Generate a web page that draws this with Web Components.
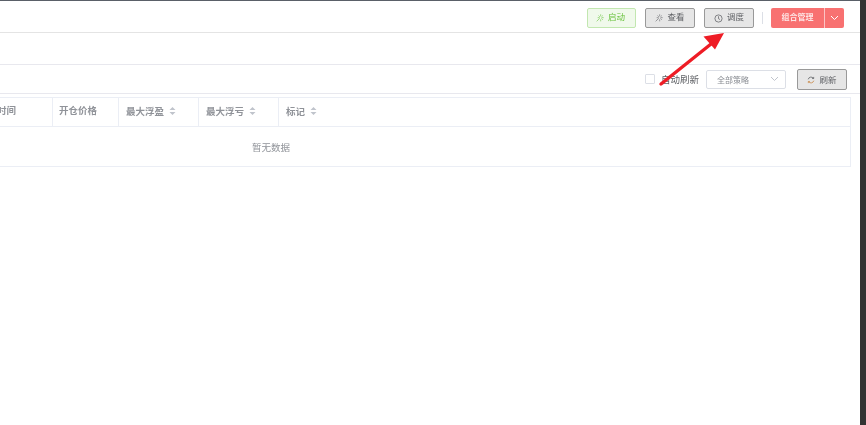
<!DOCTYPE html>
<html lang="zh">
<head>
<meta charset="utf-8">
<title>组合管理</title>
<style>
html, body { margin: 0; height: 100%; overflow: hidden; background: #fff; }
body { font-family: "Liberation Sans", "Noto Sans CJK SC", sans-serif; font-size: 9.5px; color: #606266; }
</style>
</head>
<body>
<app-shell>
  <top-bar>
    <ui-button kind="success" icon="pin">启动</ui-button>
    <ui-button icon="pin" style="margin-left:9px">查看</ui-button>
    <ui-button icon="clock" style="margin-left:9px">调度</ui-button>
    <span style="width:1px;height:12px;background:#dcdfe6;margin:0 8px"></span>
    <split-button>组合管理</split-button>
  </top-bar>
  <tool-bar></tool-bar>
  <data-table></data-table>
  <red-arrow></red-arrow>
</app-shell>

<script>
const icons = {
  // 图钉: 中心放射短线 + 左下的针
  pin: '<svg width="8" height="8" viewBox="0 0 12 12" fill="none" stroke="currentColor" stroke-width=".9"><path d="M7 .5v3M7 8v3M2.500 5.500h3M8.500 5.500h3M3.800 2.300l2 2M10.200 2.300l-2 2M10.200 8.700l-2-2M5.500 6.500L1 11"/></svg>',
  clock: '<svg width="9" height="9" viewBox="0 0 12 12" fill="none" stroke="currentColor" stroke-width="1"><circle cx="6" cy="6" r="4.800"/><path d="M6 3v3.200l2 1.200"/></svg>',
  refresh: '<svg width="8" height="8" viewBox="0 0 12 12" fill="none" stroke-width="1.200"><path d="M1.800 5A4.400 4.400 0 0 1 9.600 3.400" stroke="#606266"/><path d="M10.200 7A4.400 4.400 0 0 1 2.400 8.600" stroke="#c98a4a"/><path d="M10 1.400v2.400H7.600" stroke="#606266"/><path d="M2 10.600V8.200h2.400" stroke="#c98a4a"/></svg>'
};
const chevron = '<svg width="9" height="6" viewBox="0 0 9 6" fill="none" stroke="currentColor" stroke-width="1"><path d="M1 1l3.500 3.500L8 1"/></svg>';

class UiButton extends HTMLElement {
  constructor() {
    super();
    const icon = icons[this.getAttribute('icon')] || '';
    this.attachShadow({ mode: 'open' }).innerHTML = `
      <style>
      :host { display: inline-flex; box-sizing: border-box; width: 50px; height: 20px; align-items: center; justify-content: center; gap: 4px;
        background: #e6e6e6; border: 1px solid #999; border-radius: 2px; color: #606266; font-size: 8.5px; white-space: nowrap; }
      :host([kind=success]) { width: 49px; background: #f0f9eb; border-color: #c2e7b0; color: #67c23a; padding-right: 2px; }
      svg { display: block; }
      .txt { margin-top: var(--txt-offset, -4px); }
      </style>${icon}<span class="txt"><slot></slot></span>`;
  }
}

class SplitButton extends HTMLElement {
  constructor() {
    super();
    this.attachShadow({ mode: 'open' }).innerHTML = `
      <style>
      :host { display: inline-flex; height: 20px; background: #f87171; border-radius: 2px; color: #fde4e4; font-size: 8px; font-weight: 700; }
      .main { width: 53px; display: flex; align-items: center; justify-content: center; padding-bottom: 4px; box-sizing: border-box; }
      .more { width: 20px; display: flex; align-items: center; justify-content: center; color: #fff; position: relative; }
      .more::before { content: ""; position: absolute; left: 0; top: 0; bottom: 0; width: 1px; background: #fbc4c4; }
      svg { display: block; }
      </style>
      <div class="main"><slot></slot></div><div class="more">${chevron}</div>`;
  }
}

class TopBar extends HTMLElement {
  constructor() {
    super();
    this.attachShadow({ mode: 'open' }).innerHTML = `
      <style>
      :host { display: flex; box-sizing: border-box; height: 33px; align-items: center; justify-content: flex-end;
        padding: 3px 16px 0 0; border-top: 1px solid #5a6068; border-bottom: 1px solid #e4e4e4; }
      </style><slot></slot>`;
  }
}

class ToolBar extends HTMLElement {
  constructor() {
    super();
    this.attachShadow({ mode: 'open' }).innerHTML = `
      <style>
      :host { display: flex; box-sizing: border-box; height: 30px; margin-top: 31px; align-items: center; justify-content: flex-end;
        padding: 0 13px 0 0; border-top: 1px solid #e8e8ee; border-bottom: 1px solid #e8e8ee; }
      .check { width: 10px; height: 10px; box-sizing: border-box; border: 1px solid #dcdfe6; border-radius: 1px; margin-right: 6px; }
      .label { margin-right: 7px; font-size: 9.5px; color: #606266; }
      .select { box-sizing: border-box; width: 80px; height: 19px; border: 1px solid #dcdfe6; border-radius: 2px; margin-right: 11px;
        display: flex; align-items: center; justify-content: space-between; padding: 0 6px 0 10px; color: #8a8d93; font-size: 8px; }
      .select svg { color: #c0c4cc; display: block; }
      ui-button { height: 21px; margin-top: 1px; --txt-offset: -2px; }
      </style>
      <div class="check"></div>
      <span class="label">自动刷新</span>
      <div class="select"><span>全部策略</span>${chevron}</div>
      <ui-button icon="refresh">刷新</ui-button>`;
  }
}

class DataTable extends HTMLElement {
  constructor() {
    super();
    const cols = [['开仓时间', 84, 0], ['开仓价格', 66, 0], ['最大浮盈', 80, 1], ['最大浮亏', 80, 1], ['标记', 0, 1]];
    const sort = '<svg width="7" height="8" viewBox="0 0 7 8" fill="#c0c4cc"><path d="M3.500 0L6.500 3H.5zM3.500 8L.5 5h6z"/></svg>';
    const head = cols.map(([t, w, s]) =>
      `<div class="th${s ? ' sort' : ''}" style="${w ? `flex:0 0 ${w}px` : 'flex:1'}"><span>${t}</span>${s ? sort : ''}</div>`).join('');
    this.attachShadow({ mode: 'open' }).innerHTML = `
      <style>
      :host { display: block; margin: 3px 9px 0 -32px; border: 1px solid #ebeef5; box-sizing: border-box; height: 70px; color: #909399; font-size: 9.5px; }
      .head { display: flex; height: 28px; border-bottom: 1px solid #ebeef5; box-sizing: content-box; }
      .th { display: flex; align-items: center; gap: 5px; box-sizing: border-box; padding: 0 0 5px 7px; border-right: 1px solid #ebeef5; font-weight: 700; color: #909399; }
      .th:nth-child(1) { padding-left: 9px; }
      .th:nth-child(2) { padding-left: 6px; }
      .th.sort { padding-bottom: 2px; }
      .th:last-child { border-right: 0; }
      .empty { height: 39px; display: flex; align-items: center; padding-left: 283px; color: #909399; }
      </style>
      <div class="head">${head}</div>
      <div class="empty"><span>暂无数据</span></div>`;
  }
}

class RedArrow extends HTMLElement {
  constructor() {
    super();
    this.attachShadow({ mode: 'open' }).innerHTML = `
      <style>
      :host { position: absolute; left: 655px; top: 28px; width: 75px; height: 62px; pointer-events: none; }
      svg { display: block; }
      </style>
      <svg width="75" height="62" viewBox="0 0 75 62">
        <path d="M6 56L56 16" stroke="#ee1c25" stroke-width="3.400" stroke-linecap="round"/>
        <path d="M69 5L60 21.500 48.500 8.500z" fill="#ee1c25"/>
      </svg>`;
  }
}

class AppShell extends HTMLElement {
  constructor() {
    super();
    this.attachShadow({ mode: 'open' }).innerHTML = `
      <style>
      :host { display: flex; position: relative; width: 866px; height: 425px; overflow: hidden; background: #fff; }
      .page { width: 860px; flex: none; filter: blur(.3px); }
      .edge { flex: 1; background: #333; }
      </style>
      <div class="page"><slot></slot></div><div class="edge"></div>`;
  }
}

customElements.define('ui-button', UiButton);
customElements.define('split-button', SplitButton);
customElements.define('top-bar', TopBar);
customElements.define('tool-bar', ToolBar);
customElements.define('data-table', DataTable);
customElements.define('red-arrow', RedArrow);
customElements.define('app-shell', AppShell);
</script>
</body>
</html>
